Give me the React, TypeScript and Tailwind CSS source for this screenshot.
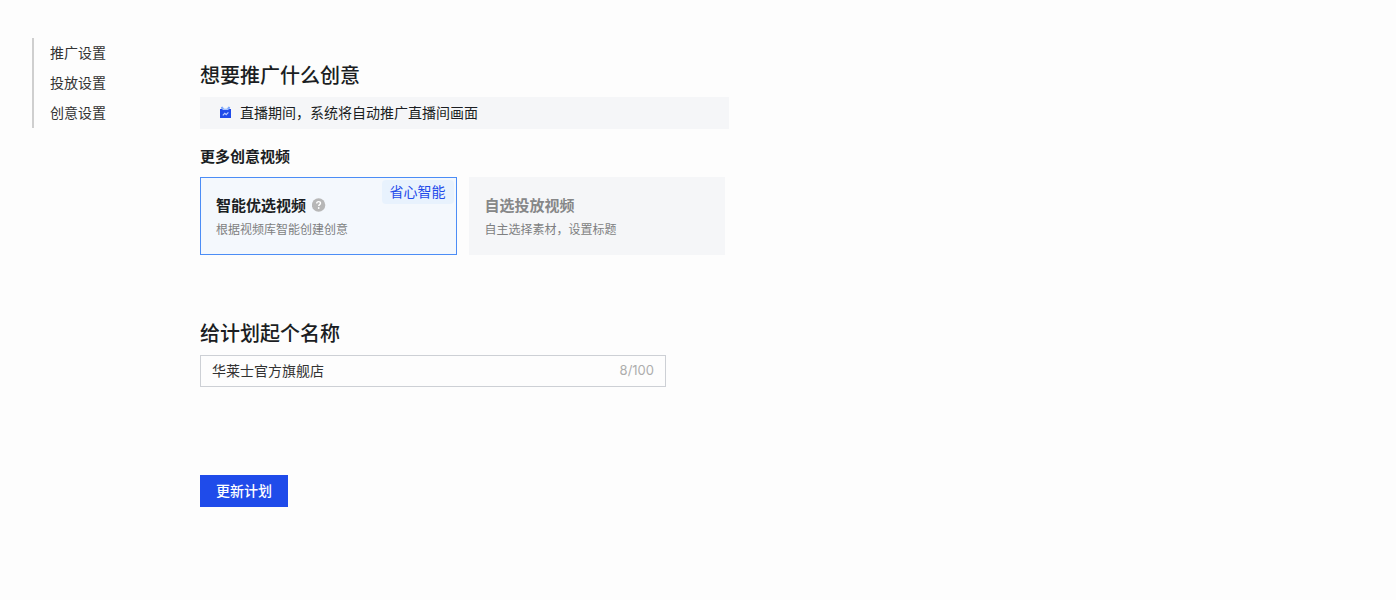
import { useState } from 'react';

const sections = [
  { id: 'promotion', label: '推广设置' },
  { id: 'delivery', label: '投放设置' },
  { id: 'creative', label: '创意设置' },
];

function LiveIcon() {
  return (
    <svg width="12" height="12" viewBox="0 0 12 12" fill="none" aria-hidden="true">
      <path d="M0.8 1.2 2.4 0.6 4.8 3.6H1.6zM10.2 1.2 8.6 0.6 6.2 3.6H9.4z" fill="#7ea8fb" />
      <path d="M2.4 2.6h6.2V4H2.4z" fill="#a6c3ff" />
      <path d="M0 3h2l1 .9h5l1-.9h2v9H0z" fill="#1f4bea" />
      <path d="M2.8 9.3 4.8 7.3 6.2 8.6 8.4 6.3" stroke="#b9ccff" strokeWidth="1.2" />
    </svg>
  );
}

function HelpIcon() {
  return (
    <svg width="14" height="14" viewBox="0 0 14 14" fill="none" aria-hidden="true">
      <circle cx="6.6" cy="7" r="6.7" fill="#b7b7b7" />
      <path
        d="M4.7 5.6C4.7 4.3 5.5 3.6 6.6 3.6s1.9.7 1.9 1.7c0 1.3-1.8 1.4-1.8 2.8"
        stroke="#fff"
        strokeWidth="1.4"
      />
      <circle cx="6.7" cy="10" r="0.9" fill="#fff" />
    </svg>
  );
}

function Heading({ children }: { children: string }) {
  return <h2 className="text-[20px] leading-7 font-medium text-[#1b1e23]">{children}</h2>;
}

type OptionProps = {
  value: string;
  title: string;
  description: string;
  badge?: string;
  help?: boolean;
  selected: boolean;
  onSelect: (value: string) => void;
};

function OptionCard({ value, title, description, badge, help, selected, onSelect }: OptionProps) {
  return (
    <label
      className={
        selected
          ? 'relative flex-1 cursor-pointer border border-[#4c8df6] bg-[#f4f8fd] px-[15px] pt-4 pb-[15px]'
          : 'relative flex-1 cursor-pointer border border-[#f5f6f8] bg-[#f5f6f8] px-[15px] pt-4 pb-[15px]'
      }
    >
      <input
        type="radio"
        name="creative-mode"
        value={value}
        checked={selected}
        onChange={() => onSelect(value)}
        className="sr-only"
      />
      <span
        className={
          selected
            ? 'flex items-center gap-1.5 text-[15px] leading-[22px] font-bold text-[#1b1e23]'
            : 'flex items-center gap-1.5 text-[15px] leading-[22px] font-bold text-[#868788]'
        }
      >
        {title}
        {help && <HelpIcon />}
      </span>
      <span className="mt-[3px] block text-[12px] leading-5 text-[#7e7f81]">{description}</span>
      {badge && (
        <span className="absolute top-[2px] right-[2px] rounded-sm bg-[#e8f2fd] px-2 pb-[2px] text-[14px] leading-[22px] text-[#1f4bea]">
          {badge}
        </span>
      )}
    </label>
  );
}

export default function App() {
  const [mode, setMode] = useState('smart');
  const [name, setName] = useState('华莱士官方旗舰店');

  return (
    <div className="flex min-h-screen items-start bg-[#fdfdfd] pl-8 font-['Noto_Sans_CJK_SC',sans-serif] text-[14px] text-[#1b1e23]">
      <nav className="mt-[38px] w-[168px] shrink-0">
        <ul className="border-l-2 border-[#cfcfcf] pl-4">
          {sections.map((section) => (
            <li key={section.id}>
              <a href={`#${section.id}`} className="block pb-[2px] leading-7 text-[#333333]">
                {section.label}
              </a>
            </li>
          ))}
        </ul>
      </nav>

      <main className="min-w-0 flex-1 pt-[61px] pr-8 pb-16">
        <section id="creative" className="max-w-[529px]">
          <Heading>想要推广什么创意</Heading>
          <p className="mt-2 flex items-center gap-2 bg-[#f5f6f8] px-5 pb-[2px] leading-[30px]">
            <LiveIcon />
            直播期间，系统将自动推广直播间画面
          </p>
          <h3 className="mt-4 pb-[2px] text-[15px] leading-[22px] font-bold">更多创意视频</h3>
          <div className="mt-2 mr-1 flex gap-3">
            <OptionCard
              value="smart"
              title="智能优选视频"
              description="根据视频库智能创建创意"
              badge="省心智能"
              help
              selected={mode === 'smart'}
              onSelect={setMode}
            />
            <OptionCard
              value="manual"
              title="自选投放视频"
              description="自主选择素材，设置标题"
              selected={mode === 'manual'}
              onSelect={setMode}
            />
          </div>
        </section>

        <section className="mt-16 max-w-[466px]">
          <Heading>给计划起个名称</Heading>
          <div className="mt-2 flex h-8 items-center border border-[#cdd0d5] px-[11px]">
            <input
              type="text"
              aria-label="给计划起个名称"
              maxLength={100}
              value={name}
              onChange={(event) => setName(event.target.value)}
              className="min-w-0 flex-1 bg-transparent pb-[2px] text-[#333333] outline-none"
            />
            <span className="font-['Inter',sans-serif] text-[13px] text-[#adadad]">
              {name.length}/100
            </span>
          </div>
        </section>

        <button
          type="button"
          className="mt-[88px] block h-8 cursor-pointer bg-[#1f4bea] px-4 pb-[2px] font-medium text-white"
        >
          更新计划
        </button>
      </main>
    </div>
  );
}
